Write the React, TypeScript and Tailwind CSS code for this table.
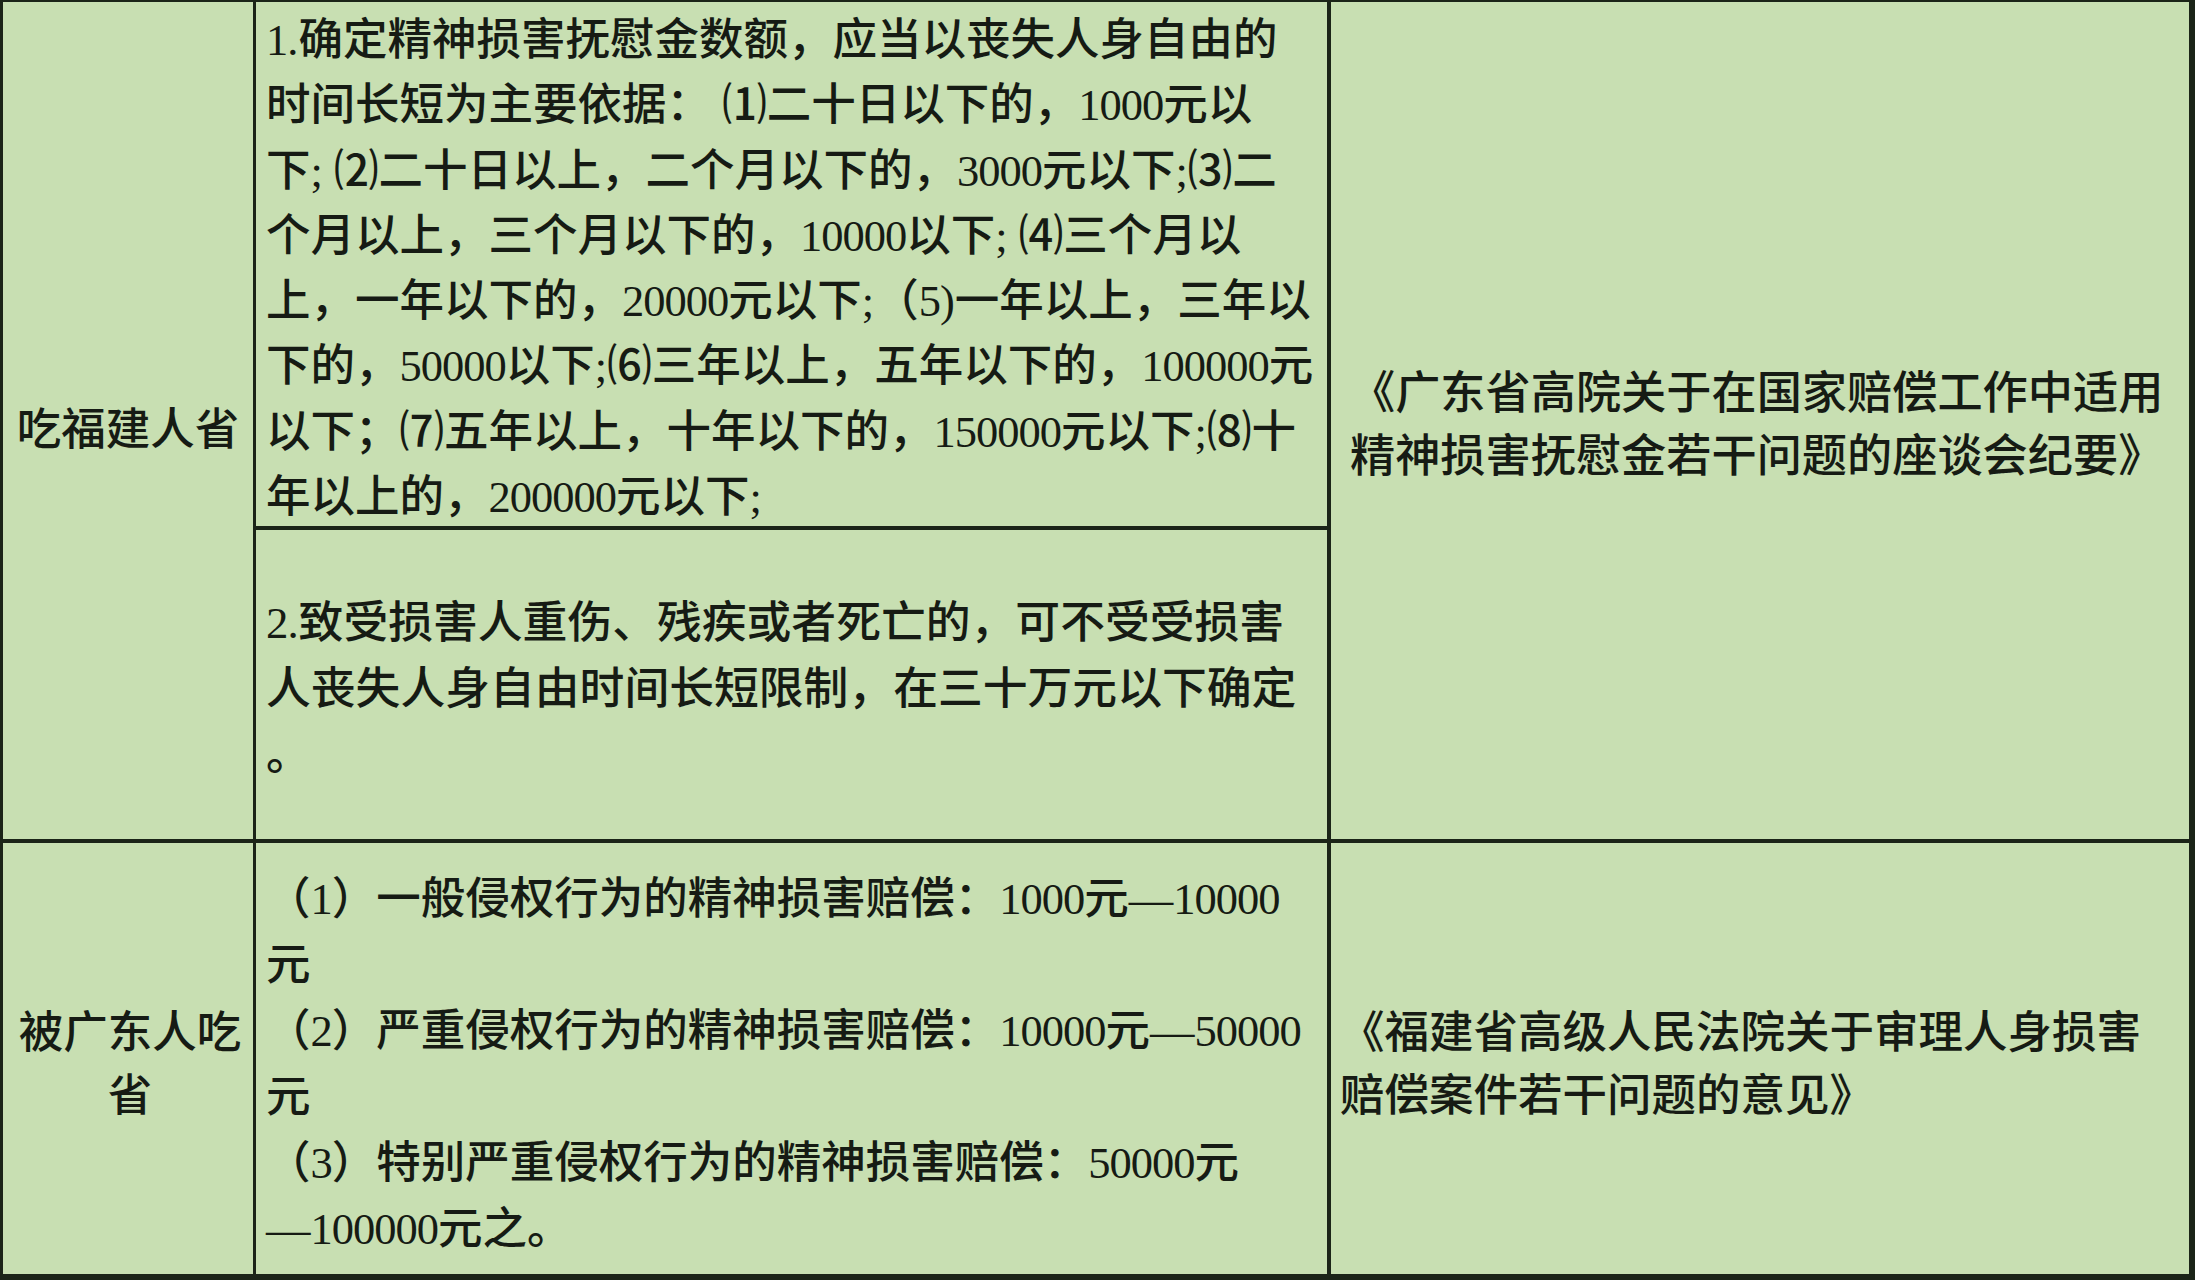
const lineColor = "border-[#1b2418]"

const firstRule = [
  "1.确定精神损害抚慰金数额，应当以丧失人身自由的",
  "时间长短为主要依据： ⑴二十日以下的，1000元以",
  "下; ⑵二十日以上，二个月以下的，3000元以下;⑶二",
  "个月以上，三个月以下的，10000以下; ⑷三个月以",
  "上，一年以下的，20000元以下;（5)一年以上，三年以",
  "下的，50000以下;⑹三年以上，五年以下的，100000元",
  "以下；⑺五年以上，十年以下的，150000元以下;⑻十",
  "年以上的，200000元以下;",
]

const secondRule = [
  "2.致受损害人重伤、残疾或者死亡的，可不受受损害",
  "人丧失人身自由时间长短限制，在三十万元以下确定",
  "。",
]

const fujianRules = [
  "（1）一般侵权行为的精神损害赔偿：1000元—10000",
  "元",
  "（2）严重侵权行为的精神损害赔偿：10000元—50000",
  "元",
  "（3）特别严重侵权行为的精神损害赔偿：50000元",
  "—100000元之。",
]

// digits in the scan are a bit narrower than Times
function Line({ text }: { text: string }) {
  return (
    <div className="whitespace-nowrap">
      {text.split(/(\d+)/).map((part, i) =>
        /^\d+$/.test(part) ? (
          <span key={i} className="tracking-[-1px]">
            {part}
          </span>
        ) : (
          part
        )
      )}
    </div>
  )
}

function Lines({ lines }: { lines: string[] }) {
  return (
    <>
      {lines.map((line, i) => (
        <Line key={i} text={line} />
      ))}
    </>
  )
}

export default function App() {
  return (
    <div
      className={`flex h-[1280px] w-[2195px] flex-col border-t-2 border-r-[6px] border-b-[6px] border-l-[3px] ${lineColor} bg-[#c8dfb2] text-[44.5px] font-medium text-[#161b14]`}
      style={{ fontFamily: '"Liberation Serif", "Noto Sans CJK SC", serif' }}
    >
      {/* Row 1 */}
      <div className={`flex h-[841px] border-b-4 ${lineColor}`}>
        <div className={`flex w-[253px] items-center justify-center border-r-[3px] ${lineColor} pt-[20px] leading-[63px]`}>
          吃福建人省
        </div>
        <div className={`flex w-[1075px] flex-col border-r-4 ${lineColor}`}>
          <div className={`flex h-[528px] flex-col border-b-4 ${lineColor} pt-[6px] pl-[10px] leading-[65.3px]`}>
            <Lines lines={firstRule} />
          </div>
          <div className="flex flex-1 flex-col justify-center pt-[8px] pl-[10px] text-[44.8px] leading-[66px]">
            <Lines lines={secondRule} />
          </div>
        </div>
        <div className="flex flex-1 flex-col justify-center pt-[11px] pl-[19px] text-[45.2px] leading-[63px]">
          <Lines
            lines={[
              "《广东省高院关于在国家赔偿工作中适用",
              "精神损害抚慰金若干问题的座谈会纪要》",
            ]}
          />
        </div>
      </div>

      {/* Row 2 */}
      <div className="flex flex-1">
        <div className={`flex w-[253px] flex-col items-center justify-center border-r-[3px] ${lineColor} pt-[13px] pl-[4px] text-center leading-[63px]`}>
          <div>被广东人吃</div>
          <div>省</div>
        </div>
        <div className={`flex w-[1075px] flex-col justify-center border-r-4 ${lineColor} pt-[11px] pl-[10px] leading-[66px]`}>
          <Lines lines={fujianRules} />
        </div>
        <div className="flex flex-1 flex-col justify-center pt-[13px] pl-[9px] leading-[63px]">
          <Lines
            lines={[
              "《福建省高级人民法院关于审理人身损害",
              "赔偿案件若干问题的意见》",
            ]}
          />
        </div>
      </div>
    </div>
  )
}
